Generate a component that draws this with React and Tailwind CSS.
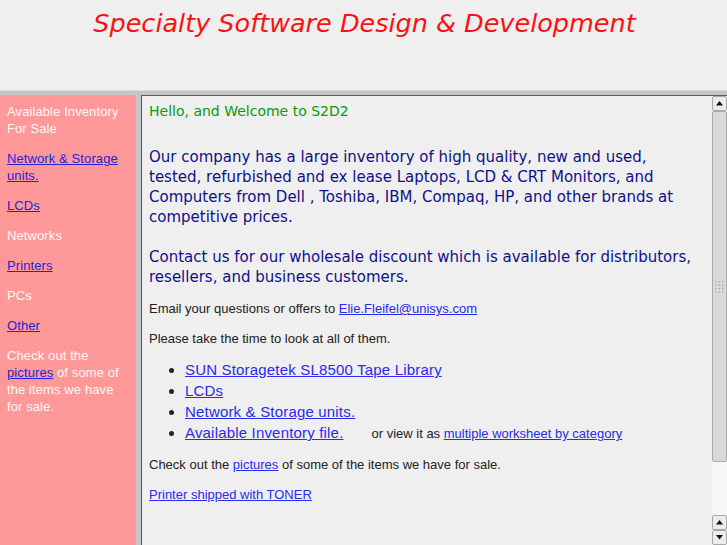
const dv = { fontFamily: '"DejaVu Sans", sans-serif' };
const ls = { fontFamily: '"Liberation Sans", Arial, sans-serif' };

function Arrow({ down }) {
  return (
    <div className="h-[15px] w-[15px] shrink-0 bg-[#ececec] border border-[#a8a8a8] rounded-[2px] flex items-center justify-center">
      <svg width="7" height="5" viewBox="0 0 7 5">
        {down ? <polygon points="0,0 7,0 3.5,4.5" fill="#111" /> : <polygon points="0,4.5 7,4.5 3.5,0" fill="#111" />}
      </svg>
    </div>
  );
}

function Scrollbar() {
  return (
    <div className="w-[15px] shrink-0 flex flex-col bg-[#f6f6f6]">
      <Arrow />
      <div className="h-[351px] shrink-0 bg-[#dadada] border border-[#ababab] rounded-[2px] flex items-center justify-center">
        <svg width="11" height="14" viewBox="0 0 11 14">
          {[0, 1, 2, 3].map((r) =>
            [0, 1, 2].map((c) => (
              <rect key={r + '-' + c} x={1 + c * 3.5} y={1 + r * 3.5} width="1.3" height="1.3" fill="#a0a0a0" />
            ))
          )}
        </svg>
      </div>
      <div className="flex-1 bg-[#f7f7f7]" />
      <Arrow />
      <Arrow down />
    </div>
  );
}

export default function App() {
  const leftLink = 'text-[#2424d6] underline';
  const link = 'text-[#2a2af0] underline';
  return (
    <div className="w-[727px] h-[545px] flex flex-col bg-[#efefef] overflow-hidden">
      <header className="h-[90px] shrink-0 flex justify-center pt-[8px]">
        <h1 className="text-[25.5px] leading-[30px] italic text-[#ff1010] pl-[2px]" style={dv}>
          Specialty Software Design &amp; Development
        </h1>
      </header>
      <div className="h-[5px] shrink-0 bg-[#c6c6c6] border-t border-[#dadada]" />
      <div className="flex flex-1 min-h-0">
        <aside className="w-[136px] shrink-0 bg-[#ff9999] text-[#fff6f6] text-[13px] leading-[17px] tracking-[0.1px] pl-[7px] pr-[14px] pt-[8px]" style={ls}>
          <p>Available Inventory<br />For Sale</p>
          <p className="mt-[13px]"><a className={leftLink} href="#">Network &amp; Storage units.</a></p>
          <p className="mt-[13px]"><a className={leftLink} href="#">LCDs</a></p>
          <p className="mt-[13px]">Networks</p>
          <p className="mt-[13px]"><a className={leftLink} href="#">Printers</a></p>
          <p className="mt-[13px]">PCs</p>
          <p className="mt-[13px]"><a className={leftLink} href="#">Other</a></p>
          <p className="mt-[13px]">
            Check out the <a className={leftLink} href="#">pictures</a> of some of the items we have for sale.
          </p>
        </aside>
        <div className="w-[5px] shrink-0 bg-[#c6c6c6]" />
        <main className="flex-1 flex min-w-0 border-l border-t border-[#5a5a5a]">
          <div className="flex-1 min-w-0 pl-[7px] pr-[10px] pt-[6px]">
            <p className="text-[14px] leading-[18px] text-[#0a9a0a]" style={dv}>Hello, and Welcome to S2D2</p>
            <p className="mt-[27px] text-[15px] leading-[20px] text-[#10108a]" style={dv}>
              Our company has a large inventory of high quality, new and used, tested, refurbished and ex lease Laptops, LCD &amp; CRT Monitors, and Computers from Dell , Toshiba, IBM, Compaq, HP, and other brands at competitive prices.
            </p>
            <p className="mt-[20px] text-[15px] leading-[20px] text-[#10108a]" style={dv}>
              Contact us for our wholesale discount which is available for distributors, resellers, and business customers.
            </p>
            <div className="text-[13px] leading-[17px] text-[#222]" style={ls}>
              <p className="mt-[13px]">
                Email your questions or offers to <a className={link} href="#">Elie.Fleifel@unisys.com</a>
              </p>
              <p className="mt-[13px]">Please take the time to look at all of them.</p>
              <ul className="mt-[12px] list-disc pl-[36px] text-[15px] leading-[21px] tracking-[0.18px]">
                <li><a className={link} href="#">SUN Storagetek SL8500 Tape Library</a></li>
                <li><a className={link} href="#">LCDs</a></li>
                <li><a className={link} href="#">Network &amp; Storage units.</a></li>
                <li>
                  <a className={link} href="#">Available Inventory file.</a>
                  <span className="ml-[28px] text-[13px] tracking-normal">
                    or view it as <a className={link} href="#">multiple worksheet by category</a>
                  </span>
                </li>
              </ul>
              <p className="mt-[12px]">
                Check out the <a className={link} href="#">pictures</a> of some of the items we have for sale.
              </p>
              <p className="mt-[13px]"><a className={link} href="#">Printer shipped with TONER</a></p>
            </div>
          </div>
          <Scrollbar />
        </main>
      </div>
    </div>
  );
}
